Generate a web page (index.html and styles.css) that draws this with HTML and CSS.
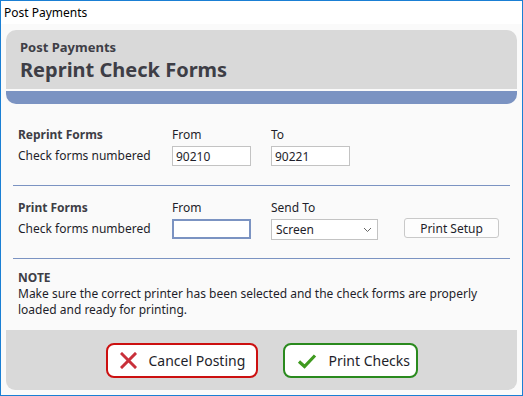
FILE: index.html
```html
<!DOCTYPE html>
<html lang="en">
<head>
    <meta charset="UTF-8">
    <title>Post Payments</title>
    <link rel="stylesheet" href="styles.css">
</head>
<body>
    <div class="window">
        <div class="titlebar">Post Payments</div>
        <div class="content">
            <div class="header">
                <div class="header-top">
                    <div class="subtitle">Post Payments</div>
                    <h1>Reprint Check Forms</h1>
                </div>
                <div class="header-bar"></div>
            </div>

            <div class="section form-grid">
                <div class="bold">Reprint Forms</div>
                <div>From</div>
                <div>To</div>
                <div></div>
                <div class="row-label">Check forms numbered</div>
                <div><input type="text" class="field" value="90210"></div>
                <div><input type="text" class="field" value="90221"></div>
                <div></div>
            </div>

            <div class="section form-grid second">
                <div class="bold">Print Forms</div>
                <div>From</div>
                <div>Send To</div>
                <div></div>
                <div class="row-label">Check forms numbered</div>
                <div><input type="text" class="field focused" value=""></div>
                <div>
                    <div class="select">
                        <span>Screen</span>
                        <svg width="9" height="6" viewBox="0 0 9 6"><path d="M1 1 L4.5 4.5 L8 1" fill="none" stroke="#666" stroke-width="1"/></svg>
                    </div>
                </div>
                <div><button class="setup-btn">Print Setup</button></div>
            </div>

            <div class="section note">
                <div class="bold">NOTE</div>
                <p>Make sure the correct printer has been selected and the check forms are properly<br>loaded and ready for printing.</p>
            </div>

            <div class="footer">
                <button class="action-btn cancel">
                    <svg width="17" height="17" viewBox="0 0 17 17"><path d="M2 2 L15 15 M15 2 L2 15" stroke="#c9303a" stroke-width="3" stroke-linecap="square"/></svg>
                    Cancel Posting
                </button>
                <button class="action-btn print">
                    <svg width="20" height="16" viewBox="0 0 20 16"><path d="M2 8.5 L7.5 13.5 L18 2.5" fill="none" stroke="#3f9a1f" stroke-width="3.2"/></svg>
                    Print Checks
                </button>
            </div>
        </div>
    </div>
</body>
</html>
```

FILE: styles.css
```css
* {
    box-sizing: border-box;
    margin: 0;
    padding: 0;
}

body {
    font-family: "Noto Sans", "Open Sans", sans-serif;
    font-size: 12px;
    color: #1e1e2a;
}

.window {
    width: 523px;
    height: 396px;
    border: 1px solid #1a7fd4;
    background-color: #fafafa;
    display: flex;
    flex-direction: column;
}

.titlebar {
    height: 23px;
    line-height: 23px;
    padding-left: 3px;
    background-color: #fff;
    color: #000;
}

.content {
    flex: 1;
    padding: 6px 5px 5px 5px;
    display: flex;
    flex-direction: column;
}

.header {
    border-radius: 10px;
    overflow: hidden;
}

.header-top {
    background-color: #d9d9d9;
    height: 61px;
    padding: 8px 14px 0;
    border-bottom: 2px solid #fafafa;
    color: #3e3e46;
}

.subtitle {
    font-size: 13px;
    font-weight: bold;
    line-height: 18px;
}

h1 {
    font-size: 20px;
    line-height: 26px;
    margin-top: 1px;
}

.header-bar {
    height: 13px;
    background-color: #7b93c2;
}

.bold {
    font-weight: bold;
    color: #3e3e46;
}

.section {
    margin: 0 7px;
    padding-left: 5px;
}

.form-grid {
    display: grid;
    grid-template-columns: 154px 99px 133px 95px;
    grid-template-rows: 16px 20px;
    row-gap: 3px;
    line-height: 16px;
    padding-top: 23px;
    padding-bottom: 19px;
    border-bottom: 1px solid #7b93c2;
}

.form-grid.second {
    padding-top: 14px;
}

.row-label {
    line-height: 20px;
}

.field {
    width: 79px;
    height: 20px;
    border: 1px solid #c3c3c3;
    background-color: #fff;
    font-family: inherit;
    font-size: 12px;
    color: #1e1e2a;
    padding: 0 3px;
    outline: none;
}

.field.focused {
    border: 2px solid #7b93c2;
}

.select {
    width: 107px;
    height: 21px;
    border: 1px solid #c3c3c3;
    background-color: #fff;
    display: flex;
    align-items: center;
    justify-content: space-between;
    padding: 0 5px 0 4px;
}

.setup-btn {
    width: 95px;
    height: 20px;
    margin-top: -1px;
    border: 1px solid #c9c9c9;
    border-radius: 3px;
    background-color: #fdfdfd;
    font-family: inherit;
    font-size: 12px;
    color: #1e1e2a;
}

.note {
    padding-top: 11px;
    line-height: 16px;
    height: 71px;
}

.note p {
    white-space: nowrap;
}

.footer {
    background-color: #d9d9d9;
    border-radius: 0 0 9px 9px;
    height: 60px;
    display: flex;
    justify-content: center;
    gap: 25px;
    padding-top: 13px;
}

.action-btn {
    height: 35px;
    border-radius: 8px;
    background-color: #fff;
    font-family: inherit;
    font-size: 14px;
    color: #1e1e2a;
    display: flex;
    align-items: center;
    gap: 12px;
}

.cancel {
    width: 152px;
    border: 2px solid #cc1010;
    padding-left: 12px;
}

.print {
    width: 135px;
    border: 2px solid #2a8a1e;
    padding-left: 12px;
}
```
